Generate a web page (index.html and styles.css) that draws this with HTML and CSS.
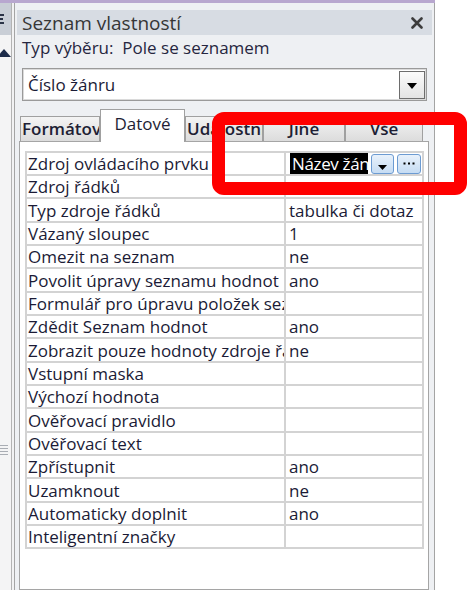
FILE: index.html
```html
<!DOCTYPE html>
<html lang="cs">
<head>
<meta charset="utf-8">
<title>Seznam vlastností</title>
<link rel="stylesheet" href="styles.css">
</head>
<body>
<div class="app">
  <div class="topline"></div>
  <div class="main">
    <div class="dock">
      <div class="dock-head">
        <svg class="dock-icon" width="11" height="32" viewBox="0 0 11 32"><path d="M0 12h4M0 16h3M0 20h4" stroke="#2b3346" stroke-width="2"/></svg>
      </div>
      <div class="dock-body">
        <svg class="dock-arrow" width="11" height="12" viewBox="0 0 11 12"><path d="M-3 11L4 3L11 11Z" fill="#1d2b4a"/></svg>
        <svg class="dock-grip" width="11" height="14" viewBox="0 0 11 14"><path d="M0 1.5h8M0 4.5h8M0 7.5h8M0 10.5h8" stroke="#a9adb4" stroke-width="1"/></svg>
      </div>
    </div>
    <div class="dock-split"></div>
    <section class="panel">
      <header class="title">
        <span>Seznam vlastností</span>
        <svg class="close" width="12" height="12" viewBox="0 0 12 12"><path d="M1.5 1.5L10.5 10.5M10.5 1.5L1.5 10.5" stroke="#3d3d3d" stroke-width="2.6" stroke-linecap="round"/></svg>
      </header>
      <div class="seltype">Typ výběru:&nbsp; Pole se seznamem</div>
      <div class="combo">
        <span class="combo-text">Číslo žánru</span>
        <span class="combo-btn"><svg width="10" height="6" viewBox="0 0 10 6"><path d="M0 0H10L5 6Z" fill="#000"/></svg></span>
      </div>
      <div class="tabs">
        <div class="tab tab-left" style="width:80px">Formátování</div>
        <div class="tab active" style="width:85px">Datové</div>
        <div class="tab tab-left" style="width:78px">Událostní</div>
        <div class="tab" style="width:82px">Jiné</div>
        <div class="tab" style="width:78px">Vše</div>
      </div>
      <div class="tabpage">
        <div class="props">
          <div class="name">Zdroj ovládacího prvku</div>
          <div class="value value-edit"><span class="selected">Název žánru</span><span class="mini-btn"><svg width="9" height="5" viewBox="0 0 9 5"><path d="M0 0H9L4.5 5Z" fill="#000"/></svg></span><span class="mini-btn dots"><svg width="12" height="3" viewBox="0 0 12 3"><rect x="0.5" y="0.5" width="2" height="2" fill="#000"/><rect x="5" y="0.5" width="2" height="2" fill="#000"/><rect x="9.5" y="0.5" width="2" height="2" fill="#000"/></svg></span></div>
          <div class="name">Zdroj řádků</div><div class="value"></div>
          <div class="name">Typ zdroje řádků</div><div class="value">tabulka či dotaz</div>
          <div class="name">Vázaný sloupec</div><div class="value">1</div>
          <div class="name">Omezit na seznam</div><div class="value">ne</div>
          <div class="name">Povolit úpravy seznamu hodnot</div><div class="value">ano</div>
          <div class="name">Formulář pro úpravu položek seznamu</div><div class="value"></div>
          <div class="name">Zdědit Seznam hodnot</div><div class="value">ano</div>
          <div class="name">Zobrazit pouze hodnoty zdroje řádků</div><div class="value">ne</div>
          <div class="name">Vstupní maska</div><div class="value"></div>
          <div class="name">Výchozí hodnota</div><div class="value"></div>
          <div class="name">Ověřovací pravidlo</div><div class="value"></div>
          <div class="name">Ověřovací text</div><div class="value"></div>
          <div class="name">Zpřístupnit</div><div class="value">ano</div>
          <div class="name">Uzamknout</div><div class="value">ne</div>
          <div class="name">Automaticky doplnit</div><div class="value">ano</div>
          <div class="name">Inteligentní značky</div><div class="value"></div>
        </div>
      </div>
    </section>
  </div>
  <div class="callout"></div>
</div>
</body>
</html>
```

FILE: styles.css
```css
* { box-sizing: border-box; }
html, body { margin: 0; padding: 0; }
body {
  width: 468px;
  height: 590px;
  overflow: hidden;
  background: #ffffff;
  font-family: "Open Sans", "Noto Sans", "DejaVu Sans", sans-serif;
  font-size: 17px;
  color: #1b1b36;
}
.app {
  position: relative;
  width: 435px;
  height: 590px;
  display: flex;
  flex-direction: column;
}
.topline { flex: none; height: 3px; background: #b8a7cf; }
.main { flex: 1; display: flex; min-height: 0; }

.dock {
  flex: none;
  width: 12px;
  border-right: 1px solid #b3b3b3;
  background: #f4f4f5;
  display: flex;
  flex-direction: column;
}
.dock-head { height: 32px; background: #c9ced6; }
.dock-icon, .dock-arrow, .dock-grip { display: block; }
.dock-arrow { margin-top: 11px; }
.dock-grip { margin-top: 386px; }
.dock-split { flex: none; width: 2px; background: #f2f2f3; }

.panel {
  flex: 1;
  min-width: 0;
  display: flex;
  flex-direction: column;
  background: #eef0f3;
  border-left: 1px solid #a4a4a4;
  border-right: 1px solid #a4a4a4;
}
.title {
  margin: 7px 2px 0 2px;
  height: 25px;
  padding: 0 9px 0 5px;
  background: #d7dce3;
  color: #363636;
  font-size: 19px;
  display: flex;
  align-items: center;
  justify-content: space-between;
}
.close { display: block; }
.seltype {
  height: 25px;
  padding-left: 7px;
  display: flex;
  align-items: center;
  color: #262640;
}
.combo {
  margin: 8px 7px 0 7px;
  height: 33px;
  border: 1px solid #9a9a9a;
  box-shadow: inset 0 0 0 1px #dadada;
  background: #ffffff;
  display: flex;
  align-items: center;
  justify-content: space-between;
  padding: 0 1px 0 5px;
}
.combo-btn {
  width: 26px;
  height: 28px;
  border: 1px solid #6d6d6d;
  background: linear-gradient(#fbfbfb, #e3e3e3);
  display: flex;
  align-items: center;
  justify-content: center;
}
.combo-btn svg { display: block; margin-top: 2px; }

.tabs {
  margin: 8px 0 0 5px;
  height: 32px;
  display: flex;
  align-items: flex-end;
  position: relative;
  z-index: 1;
}
.tab {
  flex: none;
  height: 25px;
  border: 1px solid #a0a0a0;
  border-bottom: none;
  background: linear-gradient(#f4f4f4, #dcdcdc);
  font-weight: 600;
  text-align: center;
  white-space: nowrap;
  overflow: hidden;
  line-height: 24px;
  color: #1e1e34;
}
.tab-left { text-align: left; padding-left: 1px; }
.tab.active {
  height: 33px;
  margin-bottom: -1px;
  background: #ffffff;
  font-weight: 400;
  line-height: 28px;
}
.tabpage {
  flex: 1;
  margin: 0 5px 0 4px;
  border: 1px solid #a5a5a5;
  background: #ffffff;
  padding: 9px 0 0 5px;
}
.props {
  width: 399px;
  display: grid;
  grid-template-columns: 257px 136px;
  grid-template-rows: repeat(5, 21px 21px 22px) 21px 21px;
  gap: 2px;
  padding: 2px;
  background: #d3d3d3;
}
.props > div {
  background: #ffffff;
  white-space: nowrap;
  overflow: hidden;
  display: flex;
  align-items: center;
}
.name { padding-left: 1px; }
.value { padding-left: 3px; }
.value-edit { padding-left: 4px; }
.selected {
  flex: none;
  background: #000000;
  color: #ffffff;
  width: 78px;
  height: 21px;
  padding-left: 2px;
  letter-spacing: -0.35px;
  overflow: hidden;
  display: flex;
  align-items: center;
}
.mini-btn {
  flex: none;
  width: 23px;
  height: 20px;
  margin-left: 3px;
  border: 1px solid #6c9bd2;
  border-radius: 3px;
  background: linear-gradient(#e8f1fb, #c6dcf3);
  display: flex;
  align-items: flex-end;
  justify-content: center;
  padding-bottom: 3px;
}
.mini-btn svg { display: block; }
.mini-btn.dots {
  width: 24px;
  align-items: center;
  padding-bottom: 1px;
}
.callout {
  position: absolute;
  left: 212px;
  top: 112px;
  width: 255px;
  height: 83px;
  border: 13px solid #ff0000;
  border-radius: 12px;
  z-index: 5;
}
```
